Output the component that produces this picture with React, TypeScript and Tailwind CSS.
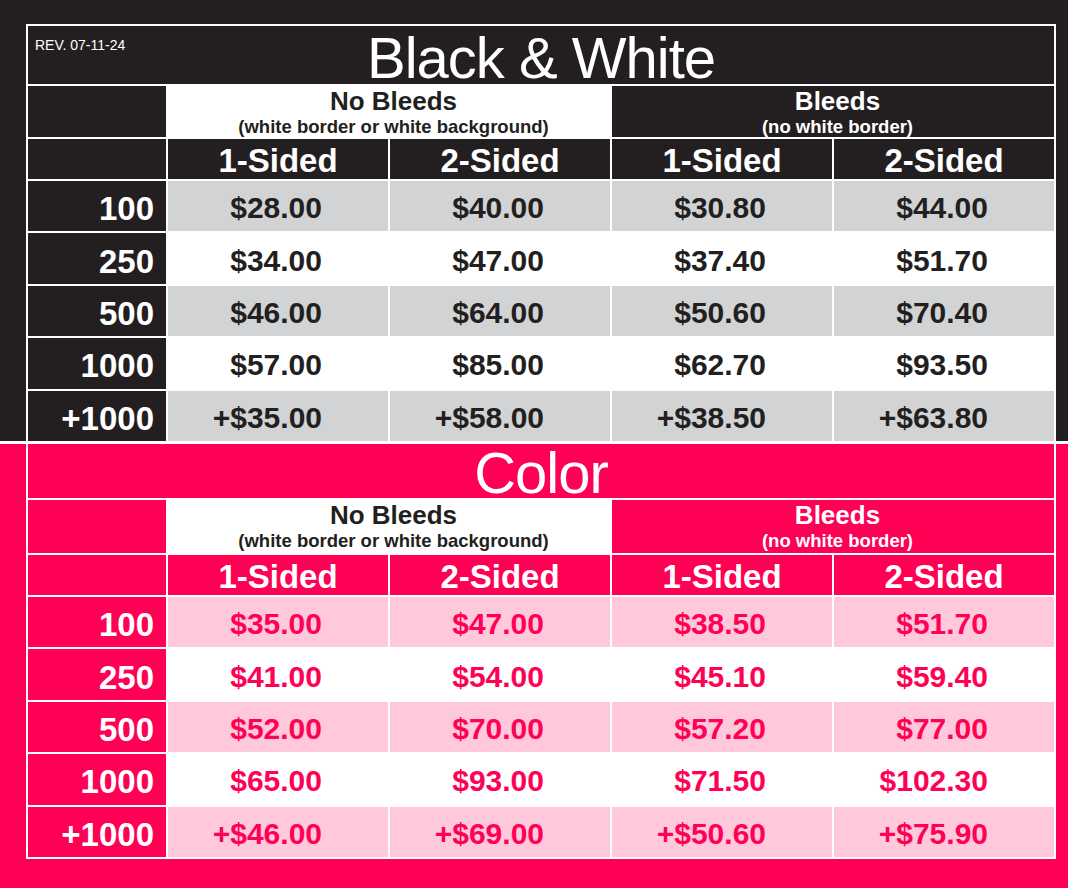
import React from 'react';

type Theme = 'bw' | 'color';

const bwRows = [
  ['100', '$28.00', '$40.00', '$30.80', '$44.00'],
  ['250', '$34.00', '$47.00', '$37.40', '$51.70'],
  ['500', '$46.00', '$64.00', '$50.60', '$70.40'],
  ['1000', '$57.00', '$85.00', '$62.70', '$93.50'],
  ['+1000', '+$35.00', '+$58.00', '+$38.50', '+$63.80'],
];

const colorRows = [
  ['100', '$35.00', '$47.00', '$38.50', '$51.70'],
  ['250', '$41.00', '$54.00', '$45.10', '$59.40'],
  ['500', '$52.00', '$70.00', '$57.20', '$77.00'],
  ['1000', '$65.00', '$93.00', '$71.50', '$102.30'],
  ['+1000', '+$46.00', '+$69.00', '+$50.60', '+$75.90'],
];

function PriceSection({ theme }: { theme: Theme }) {
  const isBw = theme === 'bw';
  const rows = isBw ? bwRows : colorRows;
  const fill = isBw ? 'bg-[#231f20]' : 'bg-[#ff0054]';
  // striped rows: gray for b&w, light pink for color
  const stripe = isBw ? 'bg-[#d1d3d4]' : 'bg-[#ffc9db]';
  const priceText = isBw ? 'text-[#231f20]' : 'text-[#ff0054]';

  return (
    <div className={`${fill} ${isBw ? 'pt-[24px]' : 'pb-[29px]'} pl-[26px] pr-[12px]`}>
      <div
        className={`grid w-[1030px] gap-[2px] bg-white border-2 border-white ${
          isBw ? 'border-b-0 grid-rows-[58px_51px_40px_repeat(5,50.4px)]' : 'border-t-0 grid-rows-[54px_53px_40px_repeat(5,50.4px)]'
        } grid-cols-[138px_repeat(4,220px)]`}
      >
        {/* title */}
        <div className={`${fill} col-span-5 relative flex justify-center items-start ${isBw ? 'pt-[3px]' : 'pt-0'}`}>
          {isBw && (
            <span className="absolute top-[11px] left-[7px] text-[14px] leading-[16px] text-white">REV. 07-11-24</span>
          )}
          <span className="text-[58px] leading-[58px] tracking-[-1px] text-white">
            {isBw ? 'Black & White' : 'Color'}
          </span>
        </div>

        {/* bleed headers */}
        <div className={fill} />
        <div className="col-span-2 bg-white flex flex-col items-center pt-[1px] pl-[9px] text-[#231f20] font-bold">
          <span className="text-[26px] leading-[29px]">No Bleeds</span>
          <span className="text-[18.5px] leading-[21px]">(white border or white background)</span>
        </div>
        <div className={`col-span-2 ${fill} flex flex-col items-center pt-[1px] pl-[9px] text-white font-bold`}>
          <span className="text-[26px] leading-[29px]">Bleeds</span>
          <span className="text-[18.5px] leading-[21px]">(no white border)</span>
        </div>

        {/* sided headers */}
        <div className={fill} />
        {['1-Sided', '2-Sided', '1-Sided', '2-Sided'].map((s, i) => (
          <div key={i} className={`${fill} flex items-center justify-center pt-[3px] text-[33px] leading-[33px] font-bold text-white`}>
            {s}
          </div>
        ))}

        {/* prices */}
        {rows.map((row, r) => {
          const bg = r % 2 === 0 ? stripe : 'bg-white';
          return (
            <React.Fragment key={row[0]}>
              <div className={`${fill} flex items-center justify-end pr-[12px] pt-[5px] text-[33px] leading-[33px] font-bold text-white`}>
                {row[0]}
              </div>
              {row.slice(1).map((p, c) => (
                <div key={c} className={`${bg} flex items-center justify-end pr-[66px] pt-[4px] text-[30px] leading-[30px] font-bold ${priceText}`}>
                  {p}
                </div>
              ))}
            </React.Fragment>
          );
        })}
      </div>
    </div>
  );
}

export default function App() {
  return (
    <div className="w-[1080px] h-[888px] bg-white overflow-hidden font-['Liberation_Sans',Arial,sans-serif]">
      <div className="w-[1068px]">
        <PriceSection theme="bw" />
        <div className="h-[3px] bg-white" />
        <PriceSection theme="color" />
      </div>
    </div>
  );
}
